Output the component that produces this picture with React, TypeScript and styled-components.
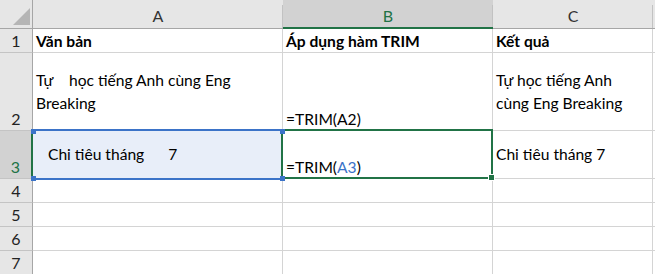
import React from 'react';
import styled, { createGlobalStyle, css } from 'styled-components';

const GREEN = '#217346';
const BLUE = '#3b73c8';
const GRID = '#d4d4d4';
const HEAD_BG = '#e6e6e6';
const HEAD_SEL = '#d2d2d2';

const Global = createGlobalStyle`
  html, body { margin: 0; padding: 0; background: #fff; overflow: hidden; }
  body { font-family: Lato, "Liberation Sans", sans-serif; }
`;

const Sheet = styled.div`
  display: grid;
  grid-template-columns: 33px 250px 210px 160px 1fr;
  grid-template-rows: 29px 24px 78px 48px 24px 24px 24px 24px;
  width: 655px;
  height: 274px;
  overflow: hidden;
  background: #fff;
`;

const Corner = styled.div`
  background: ${HEAD_BG};
  border-right: 1px solid #a6a6a6;
  border-bottom: 1px solid #a6a6a6;
  display: flex;
  align-items: flex-end;
  justify-content: flex-end;
  padding: 0 2px 3px 0;
  box-sizing: border-box;
`;

const ColHead = styled.div<{ $sel?: boolean }>`
  box-sizing: border-box;
  background:
    linear-gradient(to left, #c2c2c2 1px, transparent 1px) no-repeat right bottom / 100% calc(100% - 5px),
    ${(p) => (p.$sel ? HEAD_SEL : HEAD_BG)};
  border-bottom: ${(p) => (p.$sel ? `2px solid ${GREEN}` : '1px solid #a6a6a6')};
  color: ${(p) => (p.$sel ? GREEN : '#333')};
  font-size: 16px;
  display: flex;
  align-items: flex-end;
  justify-content: center;
  padding-bottom: ${(p) => (p.$sel ? 2 : 3)}px;
  line-height: 18px;
`;

const RowHead = styled.div<{ $sel?: boolean }>`
  box-sizing: border-box;
  background: ${(p) => (p.$sel ? HEAD_SEL : HEAD_BG)};
  border-right: ${(p) => (p.$sel ? `2px solid ${GREEN}` : '1px solid #a6a6a6')};
  border-bottom: 1px solid #c4c4c4;
  color: ${(p) => (p.$sel ? GREEN : '#222')};
  font-size: 16px;
  display: flex;
  align-items: flex-end;
  justify-content: center;
  padding-bottom: 2px;
  line-height: 18px;
`;

type VAlign = 'top' | 'center' | 'bottom';

const Cell = styled.div<{ $v?: VAlign; $bold?: boolean; $fill?: string }>`
  position: relative;
  box-sizing: border-box;
  border-right: 1px solid ${GRID};
  border-bottom: 1px solid ${GRID};
  background: ${(p) => p.$fill || '#fff'};
  padding: 0 3px;
  display: flex;
  flex-direction: column;
  justify-content: ${(p) =>
    p.$v === 'center' ? 'center' : p.$v === 'top' ? 'flex-start' : 'flex-end'};
  font-size: 15.6px;
  line-height: ${(p) => (p.$v === 'center' ? 23 : 21)}px;
  font-weight: ${(p) => (p.$bold ? 700 : 400)};
  color: #000;
  white-space: pre;
`;

const Ref = styled.span`
  color: ${BLUE};
`;

const Marquee = styled.div`
  position: absolute;
  left: -1px;
  right: -1px;
  top: -2px;
  bottom: -2px;
  border-top: 2px solid ${BLUE};
  border-bottom: 2px solid ${BLUE};
  pointer-events: none;
  z-index: 1;
`;

const Handle = styled.span<{ $x: 'l' | 'r'; $y: 't' | 'b'; $color: string; $size: number }>`
  position: absolute;
  width: ${(p) => p.$size}px;
  height: ${(p) => p.$size}px;
  background: ${(p) => p.$color};
  z-index: 3;
  ${(p) => (p.$x === 'l' ? css`left: -${p.$size / 2}px;` : css`right: -${p.$size / 2}px;`)}
  ${(p) => (p.$y === 't' ? css`top: -${p.$size / 2}px;` : css`bottom: -${p.$size / 2}px;`)}
`;

const ActiveBox = styled.div`
  position: absolute;
  left: -2px;
  top: -2px;
  right: -1px;
  bottom: -1px;
  border: 2px solid ${GREEN};
  pointer-events: none;
  z-index: 2;
`;

const FillHandle = styled.span`
  position: absolute;
  right: -4px;
  bottom: -4px;
  width: 5px;
  height: 5px;
  background: ${GREEN};
  border: 1px solid #fff;
`;

const Triangle = () => (
  <svg width="17" height="17" viewBox="0 0 17 17">
    <polygon points="17,0 17,17 0,17" fill="#b5b5b5" />
  </svg>
);

const cols = ['A', 'B', 'C', ''];

export default function App() {
  return (
    <>
      <Global />
      <Sheet>
        <Corner>
          <Triangle />
        </Corner>
        {cols.map((c) => (
          <ColHead key={c || 'd'} $sel={c === 'B'}>
            {c}
          </ColHead>
        ))}

        <RowHead>1</RowHead>
        <Cell $bold>Văn bản</Cell>
        <Cell $bold>Áp dụng hàm TRIM</Cell>
        <Cell $bold>Kết quả</Cell>
        <Cell />

        <RowHead>2</RowHead>
        <Cell $v="center">
          <span>{'Tự    học tiếng Anh cùng Eng'}</span>
          <span>Breaking</span>
        </Cell>
        <Cell>=TRIM(A2)</Cell>
        <Cell $v="center">
          <span>Tự học tiếng Anh</span>
          <span>cùng Eng Breaking</span>
        </Cell>
        <Cell />

        <RowHead $sel>3</RowHead>
        <Cell $v="center" $fill="#e8eef9">
          <span>{'   Chi tiêu tháng      7'}</span>
          <Marquee />
          <Handle $x="l" $y="t" $color={BLUE} $size={5} />
          <Handle $x="r" $y="t" $color={BLUE} $size={5} />
          <Handle $x="l" $y="b" $color={BLUE} $size={5} />
          <Handle $x="r" $y="b" $color={BLUE} $size={5} />
        </Cell>
        <Cell>
          <span>
            =TRIM(<Ref>A3</Ref>)
          </span>
          <ActiveBox>
            <FillHandle />
          </ActiveBox>
        </Cell>
        <Cell $v="center">Chi tiêu tháng 7</Cell>
        <Cell />

        {[4, 5, 6, 7].map((n) => (
          <React.Fragment key={n}>
            <RowHead>{n}</RowHead>
            <Cell />
            <Cell />
            <Cell />
            <Cell />
          </React.Fragment>
        ))}
      </Sheet>
    </>
  );
}
